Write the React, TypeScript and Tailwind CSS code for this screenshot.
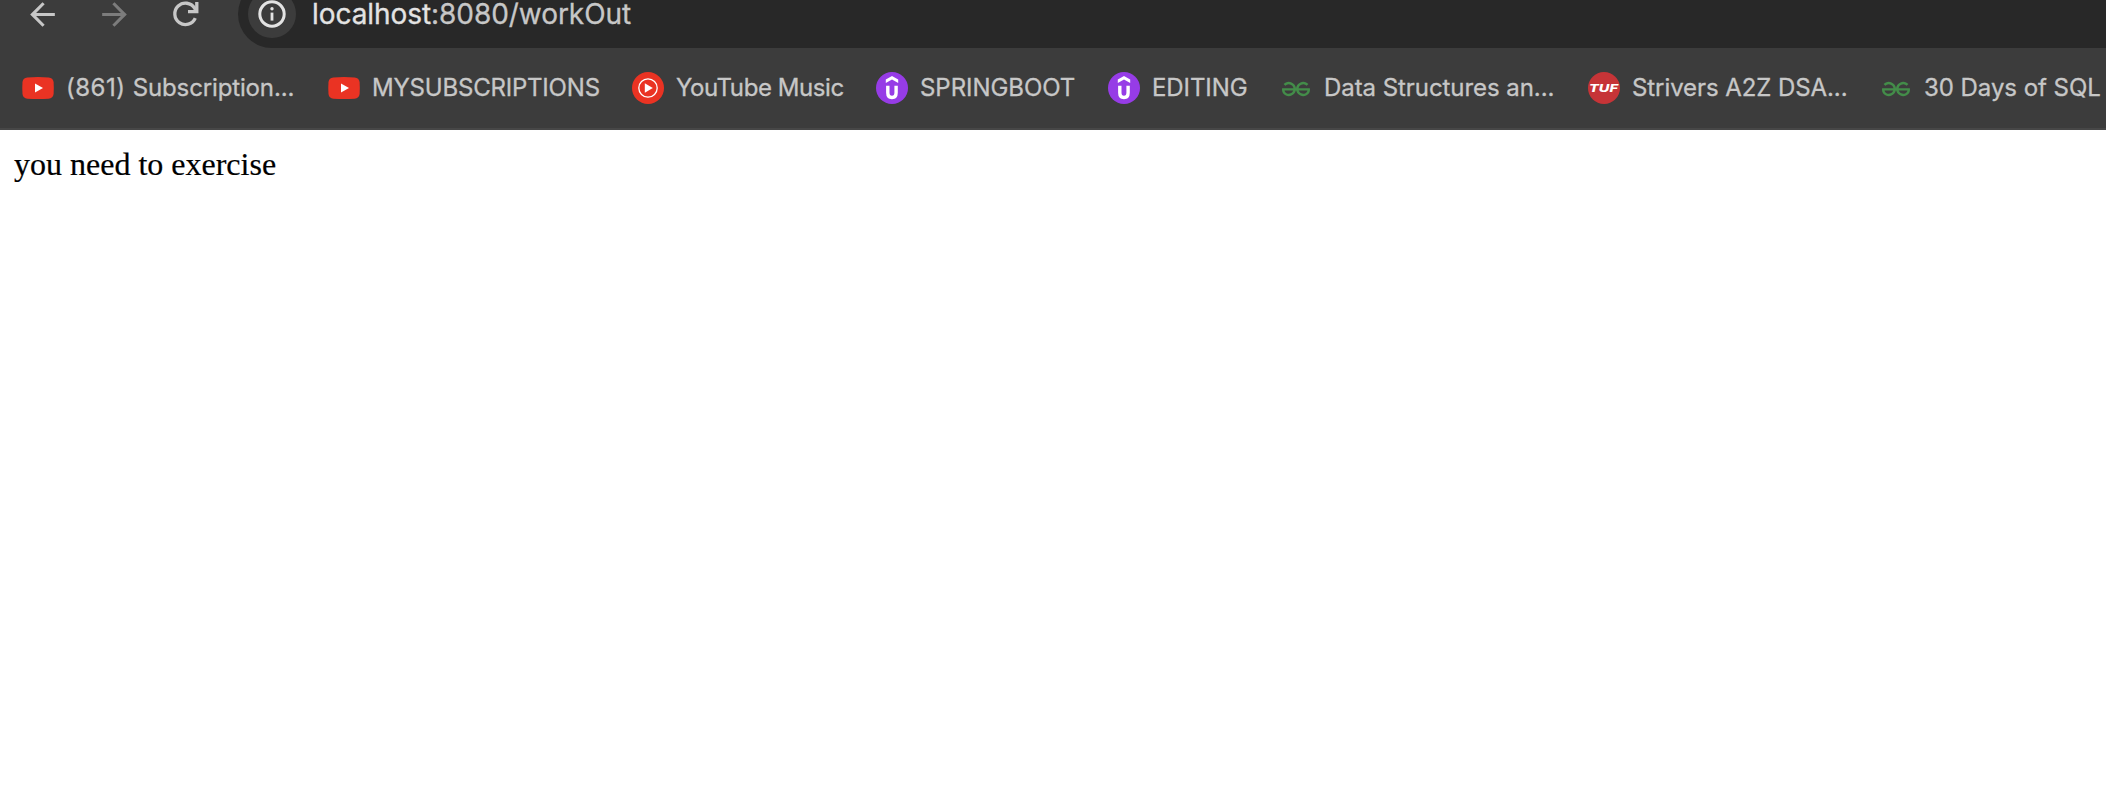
import type { ReactNode } from "react";
import { SiGeeksforgeeks } from "react-icons/si";

function YouTubeIcon() {
  return (
    <svg viewBox="0 0 32 32" className="size-8 shrink-0">
      <path
        d="M5.4 5.4Q16 4.8 26.6 5.4Q31 5.7 31.6 10Q32 16 31.6 22Q31 26.4 26.6 26.7Q16 27.3 5.4 26.7Q1 26.4 .5 22Q0 16 .5 10Q1 5.7 5.4 5.4z"
        fill="#ea3323"
      />
      <path d="M13 11.5v9l8-4.5z" fill="#fff" />
    </svg>
  );
}

function YouTubeMusicIcon() {
  return (
    <svg viewBox="0 0 32 32" className="size-8 shrink-0">
      <circle cx="16" cy="16" r="16" fill="#ea3323" />
      <circle cx="16" cy="16" r="9.2" fill="none" stroke="#fff" strokeWidth="1.3" />
      <path d="M12.8 11.2v9.6l8-4.8z" fill="#fff" />
    </svg>
  );
}

function UdemyIcon() {
  return (
    <svg viewBox="0 0 32 32" className="size-8 shrink-0">
      <circle cx="16" cy="16" r="16" fill="#963ce6" />
      <path d="M16 4l6.2 3.6v3.4L16 7.6l-6.2 3.4V7.6z" fill="#fff" />
      <path d="M11.8 13.7v7.1c0 3 1.6 4.7 4.2 4.7s4.1-1.7 4.1-4.7v-7.1" fill="none" stroke="#fff" strokeWidth="3.4" />
    </svg>
  );
}

function GeeksIcon() {
  return (
    <span className="flex size-8 shrink-0 items-center justify-center pt-px text-[#438c49]">
      <SiGeeksforgeeks size={28} />
    </span>
  );
}

function TufIcon() {
  return (
    <svg viewBox="0 0 32 32" className="size-8 shrink-0">
      <circle cx="16" cy="16" r="16" fill="#c63437" />
      <text
        x="1"
        y="20"
        textLength="29"
        lengthAdjust="spacingAndGlyphs"
        fill="#fff"
        className="font-['Inter',sans-serif] text-[10.8px] font-extrabold italic"
      >
        TUF
      </text>
    </svg>
  );
}

type Bookmark = { label: ReactNode; icon: ReactNode; width: string; tracking: string };

const bookmarks: Bookmark[] = [
  {
    label: (
      <>
        <span className="tracking-[0.5px]">(861) </span>Subscription...
      </>
    ),
    icon: <YouTubeIcon />,
    width: "w-[306px]",
    tracking: "tracking-[-0.14px]",
  },
  { label: "MYSUBSCRIPTIONS", icon: <YouTubeIcon />, width: "w-[304px]", tracking: "tracking-[-0.2px]" },
  { label: "YouTube Music", icon: <YouTubeMusicIcon />, width: "w-[244px]", tracking: "tracking-[-0.42px]" },
  { label: "SPRINGBOOT", icon: <UdemyIcon />, width: "w-[232px]", tracking: "tracking-[-0.05px]" },
  { label: "EDITING", icon: <UdemyIcon />, width: "w-[172px]", tracking: "tracking-[-0.08px]" },
  { label: "Data Structures an...", icon: <GeeksIcon />, width: "w-[308px]", tracking: "tracking-[-0.06px]" },
  { label: "Strivers A2Z DSA...", icon: <TufIcon />, width: "w-[292px]", tracking: "tracking-[-0.08px]" },
  { label: "30 Days of SQL", icon: <GeeksIcon />, width: "w-[226px]", tracking: "tracking-[-0.05px]" },
];

function Toolbar() {
  return (
    <div className="flex h-12 overflow-hidden">
      <div className="-mt-5 flex h-[68px] w-[238px] shrink-0 items-center pl-6">
        <svg viewBox="0 0 24 24" className="size-[37px] text-[#c7c7c7]" fill="currentColor">
          <path d="M20 11H7.83l5.59-5.59L12 4l-8 8 8 8 1.41-1.41L7.83 13H20v-2z" />
        </svg>
        <svg viewBox="0 0 24 24" className="ml-[34.5px] size-[37px] text-[#7c7c7c]" fill="currentColor">
          <path d="M4 11h12.17l-5.59-5.59L12 4l8 8-8 8-1.41-1.41L16.17 13H4v-2z" />
        </svg>
        <svg viewBox="0 0 36 36" className="ml-[35.5px] size-9 text-[#c7c7c7]" fill="none" stroke="currentColor" strokeWidth="3.3">
          <path d="M27.3 22.2A10.7 10.7 0 1 1 26.6 12.2l2 2.6" />
          <path d="M28.8 6v9.7H20" />
        </svg>
      </div>
      <div className="-mt-5 flex h-[68px] flex-1 items-center rounded-l-full bg-[#282828] pl-[10px]">
        <span className="flex size-12 items-center justify-center rounded-full bg-[#3c3c3c]">
          <svg viewBox="0 0 28 28" className="size-7" fill="none" stroke="#e3e3e3">
            <circle cx="14" cy="14" r="12.2" strokeWidth="3" />
            <path d="M14 12.6v8" strokeWidth="2.8" />
            <circle cx="14" cy="8.8" r="1.7" fill="#e3e3e3" stroke="none" />
          </svg>
        </span>
        <span className="ml-4 text-[28px] leading-[34px] tracking-[-0.06px] whitespace-nowrap text-[#c7c7c7] [-webkit-text-stroke:0.3px]">
          <span className="text-[#e3e3e3]">localhost</span>:8080/workOut
        </span>
      </div>
    </div>
  );
}

function BookmarksBar() {
  return (
    <div className="flex h-[82px] border-b-2 border-[#474747] pl-[22px]">
      {bookmarks.map((b, i) => (
        <div key={i} className={`flex h-20 shrink-0 items-center gap-3 ${b.width}`}>
          {b.icon}
          <span className={`text-2xl whitespace-nowrap text-[#c7c7c7] [-webkit-text-stroke:0.3px] ${b.tracking}`}>{b.label}</span>
        </div>
      ))}
    </div>
  );
}

export default function App() {
  return (
    <div className="flex h-[810px] w-[2106px] flex-col overflow-hidden bg-white">
      <header className="overflow-hidden bg-[#3c3c3c] font-['Inter',sans-serif]">
        <Toolbar />
        <BookmarksBar />
      </header>
      <main className="px-[14px] pt-4 font-['Liberation_Serif',serif] text-[32px] leading-[37px] text-black [-webkit-text-stroke:0.2px]">
        you need to exercise
      </main>
    </div>
  );
}
